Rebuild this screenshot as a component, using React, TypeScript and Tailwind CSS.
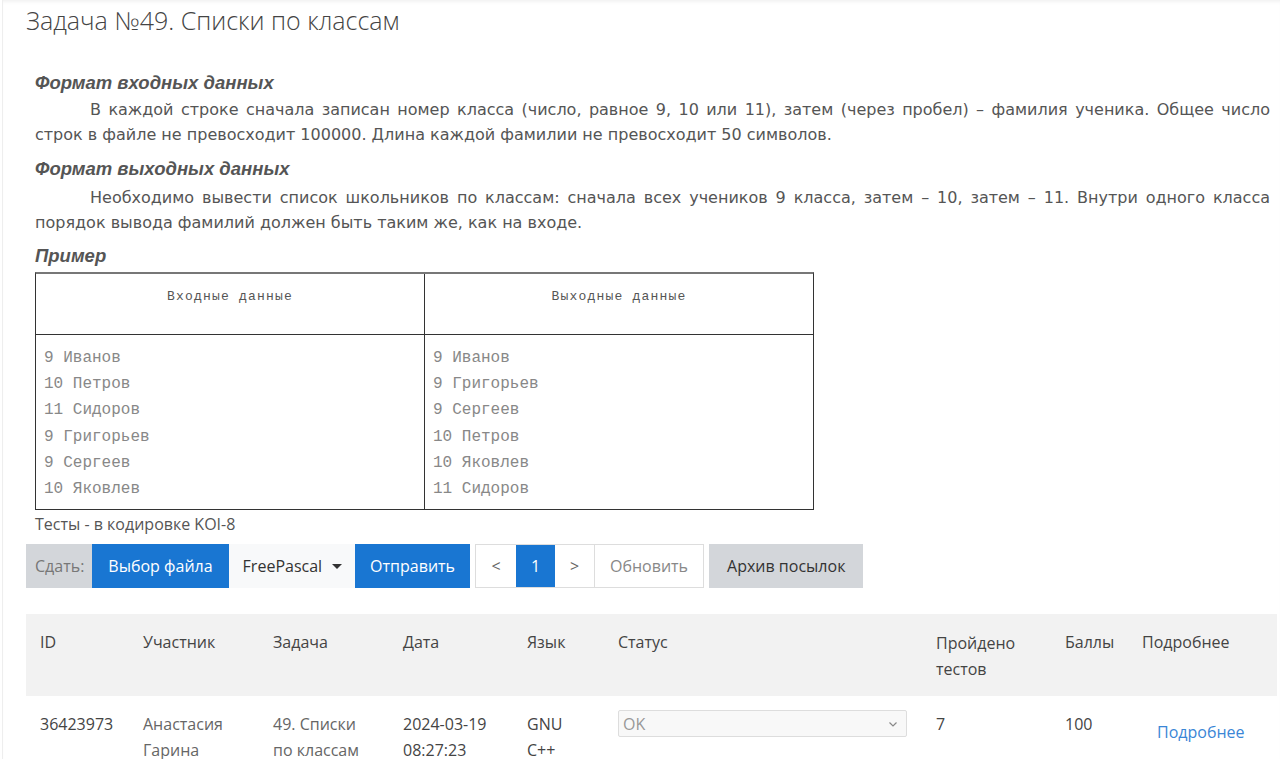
import React from "react";

const inputLines = ["9 Иванов", "10 Петров", "11 Сидоров", "9 Григорьев", "9 Сергеев", "10 Яковлев"];
const outputLines = ["9 Иванов", "9 Григорьев", "9 Сергеев", "10 Петров", "10 Яковлев", "11 Сидоров"];

const ui = "font-['Open_Sans',sans-serif]";
const prose = "font-['DejaVu_Sans',sans-serif]";
const mono = "font-['Liberation_Mono',monospace]";

function SampleColumn({ title, lines, last }: { title: string; lines: string[]; last?: boolean }) {
  return (
    <div className={`flex flex-col ${last ? "" : "border-r border-[#333]"}`}>
      <div className="h-[61px] border-b border-[#333] pt-[13px] text-center text-[13px] tracking-[1.2px] text-[#555]">
        {title}
      </div>
      <div className="px-[8px] pt-[10px] pb-[7px] text-[16px] leading-[26.2px] text-[#888]">
        {lines.map((l) => (
          <div key={l}>{l}</div>
        ))}
      </div>
    </div>
  );
}

export default function App() {
  return (
    <div className="min-h-[759px] bg-white pl-[2px]">
      <div className="min-h-[759px] border-l border-[#eee] shadow-[inset_0_4px_4px_-3px_rgba(0,0,0,0.08)]">
        <h1 className={`${ui} pl-[23px] pt-[2px] text-[25px] font-light leading-[36px] text-[#444]`}>
          Задача №49. Списки по классам
        </h1>

        <div className="pl-[32px] pr-[10px] pt-[34px]">
          <h3 className="font-['Liberation_Sans',sans-serif] text-[18.5px] font-bold italic leading-[22px] text-[#555]">
            Формат входных данных
          </h3>
          <p className={`${prose} mt-[3px] indent-[55px] text-justify text-[16px] leading-[25px] text-[#555]`}>
            В каждой строке сначала записан номер класса (число, равное 9, 10 или 11), затем (через пробел) – фамилия
            ученика. Общее число строк в файле не превосходит 100000. Длина каждой фамилии не превосходит 50 символов.
          </p>
          <h3 className="mt-[11px] font-['Liberation_Sans',sans-serif] text-[18.5px] font-bold italic leading-[22px] text-[#555]">
            Формат выходных данных
          </h3>
          <p className={`${prose} mt-[5px] indent-[55px] text-justify text-[16px] leading-[25px] text-[#555]`}>
            Необходимо вывести список школьников по классам: сначала всех учеников 9 класса, затем – 10, затем – 11.
            Внутри одного класса порядок вывода фамилий должен быть таким же, как на входе.
          </p>
          <h3 className="mt-[10px] font-['Liberation_Sans',sans-serif] text-[18.5px] font-bold italic leading-[22px] text-[#555]">
            Пример
          </h3>
          <div className={`${mono} mt-[5px] grid w-[779px] grid-cols-[389px_1fr] border border-[#333] border-t-2 border-t-[#777]`}>
            <SampleColumn title="Входные данные" lines={inputLines} />
            <SampleColumn title="Выходные данные" lines={outputLines} last />
          </div>
        </div>

        <div className={`${ui} text-[16px]`}>
          <div className="pl-[32px] pt-[3px] leading-[22px] text-[#555]">Тесты - в кодировке KOI-8</div>

          <div className="mt-[9px] ml-[23px] flex h-[44px] items-stretch">
            <div className="flex items-center bg-[#d3d6da] pl-[9px] pr-[8px] text-[#777]">Сдать:</div>
            <div className="flex items-center bg-[#1976d2] px-[16px] text-white">Выбор файла</div>
            <div className="flex items-center gap-[10px] bg-[#f8f9fa] pl-[14px] pr-[13px] text-[#333]">
              FreePascal
              <span className="h-0 w-0 border-x-[5px] border-t-[5px] border-x-transparent border-t-[#333]" />
            </div>
            <div className="flex items-center bg-[#1976d2] px-[15px] text-white">Отправить</div>
            <div className="ml-[5px] flex border border-[#ddd] bg-white">
              <div className="flex w-[40px] items-center justify-center text-[#666]">&lt;</div>
              <div className="flex w-[39px] items-center justify-center bg-[#1976d2] text-white">1</div>
              <div className="flex w-[40px] items-center justify-center border-r border-[#ddd] text-[#666]">&gt;</div>
              <div className="flex items-center px-[15px] text-[#888]">Обновить</div>
            </div>
            <div className="ml-[5px] flex items-center bg-[#d3d6da] px-[18px] text-[#333]">Архив посылок</div>
          </div>

          <table className="mt-[26px] ml-[23px] w-[1251px] border-collapse text-left text-[#444]">
            <thead>
              <tr className="h-[82px] bg-[#f2f2f2] align-top">
                <th className="w-[103px] pl-[14px] pt-[16px] font-normal">ID</th>
                <th className="w-[130px] pl-[14px] pt-[16px] font-normal">Участник</th>
                <th className="w-[130px] pl-[14px] pt-[16px] font-normal">Задача</th>
                <th className="w-[124px] pl-[14px] pt-[16px] font-normal">Дата</th>
                <th className="w-[92px] pl-[14px] pt-[16px] font-normal">Язык</th>
                <th className="w-[317px] pl-[13px] pt-[16px] font-normal">Статус</th>
                <th className="w-[129px] pl-[14px] pt-[16px] font-normal leading-[26px]">
                  Пройдено
                  <br />
                  тестов
                </th>
                <th className="w-[77px] pl-[14px] pt-[16px] font-normal">Баллы</th>
                <th className="pl-[14px] pt-[16px] font-normal">Подробнее</th>
              </tr>
            </thead>
            <tbody>
              <tr className="align-top leading-[26px]">
                <td className="pl-[14px] pt-[15px]">36423973</td>
                <td className="pl-[14px] pt-[15px] text-[#666]">
                  Анастасия
                  <br />
                  Гарина
                </td>
                <td className="pl-[14px] pt-[15px] text-[#666]">
                  49. Списки
                  <br />
                  по классам
                </td>
                <td className="pl-[14px] pt-[15px]">
                  2024-03-19
                  <br />
                  08:27:23
                </td>
                <td className="pl-[14px] pt-[15px]">
                  GNU
                  <br />
                  C++
                </td>
                <td className="pl-[13px] pt-[14px]">
                  <div className="flex h-[27px] w-[289px] items-center justify-between rounded-[2px] border border-[#ddd] bg-[#f8f8f8] px-[4px] text-[#999]">
                    OK
                    <svg width="10" height="10" viewBox="0 0 10 10" className="mr-[4px]">
                      <path d="M1.5 3.5 L5 7 L8.5 3.5" fill="none" stroke="#888" strokeWidth="1.2" />
                    </svg>
                  </div>
                </td>
                <td className="pl-[14px] pt-[15px]">7</td>
                <td className="pl-[14px] pt-[15px]">100</td>
                <td className="pl-[29px] pt-[23px] text-[#3a86d6]">Подробнее</td>
              </tr>
            </tbody>
          </table>
        </div>
      </div>
    </div>
  );
}
